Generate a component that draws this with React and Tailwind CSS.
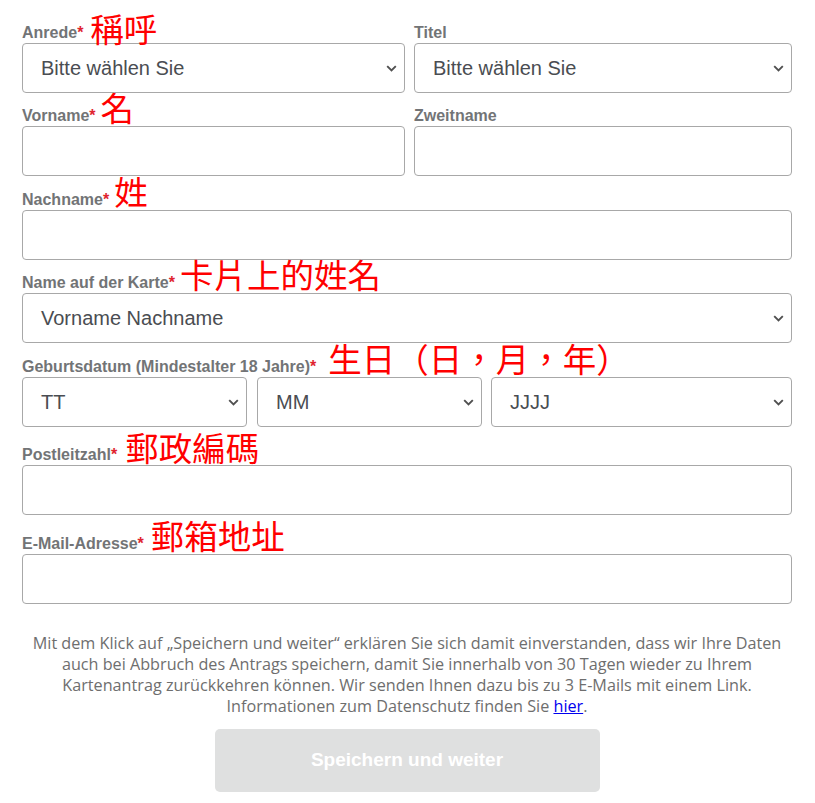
import React from "react";

const Chevron = () => (
  <svg width="11" height="7" viewBox="0 0 11 7" className="shrink-0">
    <path d="M1.2 1.2 L5.5 5.5 L9.8 1.2" fill="none" stroke="#505050" strokeWidth="1.9" />
  </svg>
);

const Label = ({ text, req = true, zh, zhClass = "" }) => (
  <div className="h-[20px] leading-[20px] text-[16px] font-bold text-[#727476] whitespace-nowrap">
    {text}
    {req && <span className="text-[#e0242f]">*</span>}
    {zh && (
      <span
        className={
          "leading-[0] text-[33.5px] font-normal text-[#ff0000] font-['Noto_Sans_CJK_TC','Noto_Sans_CJK_SC',sans-serif] " +
          zhClass
        }
      >
        {zh}
      </span>
    )}
  </div>
);

const SelectBox = ({ value }) => (
  <div className="h-[50px] border border-[#a8a8a8] rounded-[4px] bg-white flex items-center justify-between pl-[18px] pr-[7px]">
    <span className="text-[20px] text-[#4a4d52]">{value}</span>
    <Chevron />
  </div>
);

const InputBox = () => (
  <div className="h-[50px] border border-[#a8a8a8] rounded-[4px] bg-white" />
);

export default function App() {
  return (
    <div className="w-[815px] h-[803px] overflow-hidden bg-white pl-[22px] pr-[23px] pt-[23px] font-['Liberation_Sans',Arial,sans-serif]">
      <div className="grid grid-cols-[383px_378px] gap-x-[9px]">
        <div>
          <Label text="Anrede" zh="稱呼" zhClass="ml-[7px] align-[-4px]" />
          <SelectBox value="Bitte wählen Sie" />
        </div>
        <div>
          <Label text="Titel" req={false} />
          <SelectBox value="Bitte wählen Sie" />
        </div>
      </div>

      <div className="grid grid-cols-[383px_378px] gap-x-[9px] mt-[13px]">
        <div>
          <Label text="Vorname" zh="名" zhClass="ml-[5px]" />
          <InputBox />
        </div>
        <div>
          <Label text="Zweitname" req={false} />
          <InputBox />
        </div>
      </div>

      <div className="mt-[14px]">
        <Label text="Nachname" zh="姓" zhClass="ml-[5px]" />
        <InputBox />
      </div>

      <div className="mt-[13px]">
        <Label text="Name auf der Karte" zh="卡片上的姓名" zhClass="ml-[5px]" />
        <SelectBox value="Vorname Nachname" />
      </div>

      <div className="mt-[14px]">
        <Label text="Geburtsdatum (Mindestalter 18 Jahre)" zh="生日（日，月，年）" zhClass="ml-[12px]" />
        <div className="flex">
          <div className="w-[225px]">
            <SelectBox value="TT" />
          </div>
          <div className="w-[225px] ml-[10px]">
            <SelectBox value="MM" />
          </div>
          <div className="flex-1 ml-[9px]">
            <SelectBox value="JJJJ" />
          </div>
        </div>
      </div>

      <div className="mt-[18px]">
        <Label text="Postleitzahl" zh="郵政編碼" zhClass="ml-[8px] align-[-1px]" />
        <InputBox />
      </div>

      <div className="mt-[19px]">
        <Label text="E-Mail-Adresse" zh="郵箱地址" zhClass="ml-[7px]" />
        <InputBox />
      </div>

      <p className="mt-[29px] text-center text-[16.2px] leading-[21px] text-[#6e6e6e] font-['Open_Sans',sans-serif]">
        Mit dem Klick auf „Speichern und weiter“ erklären Sie sich damit einverstanden, dass wir Ihre Daten
        <br />
        auch bei Abbruch des Antrags speichern, damit Sie innerhalb von 30 Tagen wieder zu Ihrem
        <br />
        Kartenantrag zurückkehren können. Wir senden Ihnen dazu bis zu 3 E-Mails mit einem Link.
        <br />
        Informationen zum Datenschutz finden Sie{" "}
        <a href="#" className="text-[#0000ee] underline">
          hier
        </a>
        .
      </p>

      <div className="mt-[12px] mx-auto w-[385px] h-[63px] rounded-[5px] bg-[#dfe0e0] flex items-center justify-center">
        <span className="text-white font-bold text-[19px]">Speichern und weiter</span>
      </div>
    </div>
  );
}
